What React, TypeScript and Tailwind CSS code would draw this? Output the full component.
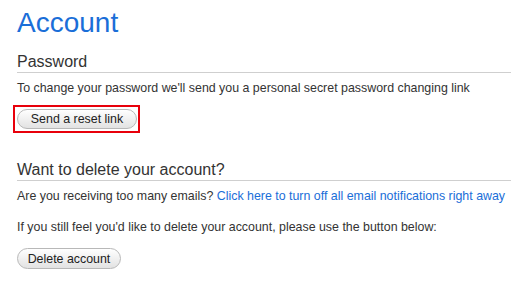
const font = { fontFamily: '"Liberation Sans", Arial, sans-serif' }

function PillButton({ label, className }: { label: string; className?: string }) {
  return (
    <button
      type="button"
      className={
        'rounded-full border border-[#b8b8b8] bg-gradient-to-b from-white to-[#e2e2e2] text-[12.4px] leading-[18px] text-[#222] ' +
        (className ?? '')
      }
    >
      {label}
    </button>
  )
}

export default function App() {
  return (
    <div className="min-h-[281px] w-[511px] bg-white pl-[17px] text-[#333]" style={font}>
      {/* Title */}
      <h1 className="pt-[7px] text-[28px] leading-[32px] text-[#1a6ed8]">Account</h1>

      {/* Password */}
      <h2 className="mt-[13px] border-b border-[#cfcfcf] text-[16px] leading-[20px] text-[#333]">Password</h2>
      <p className="mt-[7px] text-[12.4px] leading-[16px]">
        To change your password we'll send you a personal secret password changing link
      </p>
      <div className="-ml-[4px] mt-[9px] w-fit border-2 border-[#e8000b] pb-[2px] pl-[2px] pr-[1px] pt-[2px]">
        <PillButton label="Send a reset link" className="block h-[20px] w-[120px]" />
      </div>

      {/* Delete account */}
      <h2 className="mt-[27px] border-b border-[#cfcfcf] text-[16px] leading-[20px] text-[#333]">
        Want to delete your account?
      </h2>
      <p className="mt-[7px] text-[12.4px] leading-[16px]">
        Are you receiving too many emails?{' '}
        <a href="#" className="text-[#1a6ed8]">
          Click here to turn off all email notifications right away
        </a>
      </p>
      <p className="mt-[15px] text-[12.4px] leading-[16px]">
        If you still feel you'd like to delete your account, please use the button below:
      </p>
      <PillButton label="Delete account" className="mt-[13px] block h-[21px] w-[104px]" />
    </div>
  )
}
